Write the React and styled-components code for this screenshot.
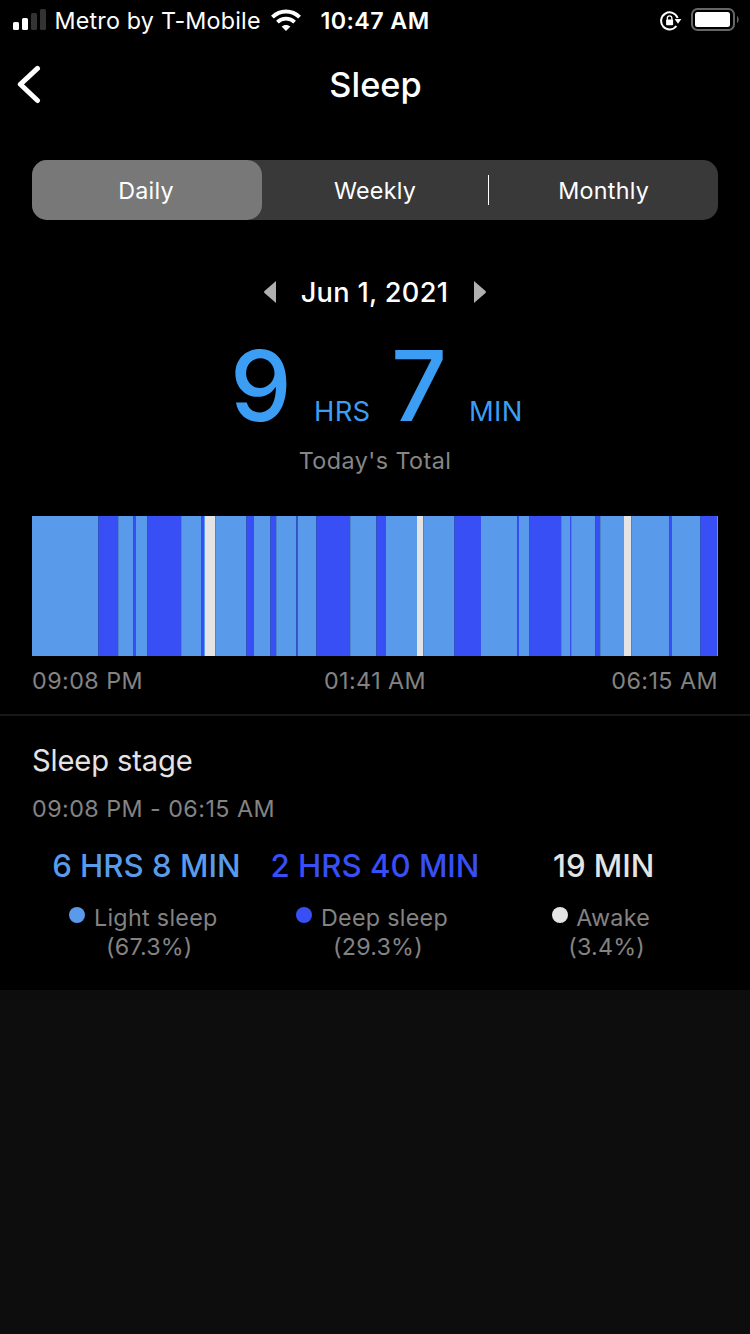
import React from "react";
import styled, { createGlobalStyle } from "styled-components";

const GlobalStyle = createGlobalStyle`
  * { box-sizing: border-box; }
  html, body { margin: 0; padding: 0; background: #0d0d0d; }
`;

const LIGHT = "#599bea";
const DEEP = "#384ff5";
const AWAKE = "#e4e4e4";

const Screen = styled.div`
  width: 750px;
  height: 1334px;
  background: #0d0d0d;
  color: #fff;
  font-family: Inter, "Liberation Sans", sans-serif;
  white-space: nowrap;
  overflow: hidden;
`;

const Content = styled.div`
  height: 990px;
  background: #000;
`;

const StatusBar = styled.header`
  display: flex;
  align-items: center;
  height: 40px;
  padding: 1px 11px 0 13px;
`;

const Signal = styled.div`
  display: flex;
  align-items: flex-end;
  gap: 3px;
  width: 41.5px;
  height: 21px;
  margin-top: -3px;
`;

const SignalBar = styled.span`
  width: 6px;
  height: ${(p) => p.$h}px;
  border-radius: 1.5px;
  background: ${(p) => (p.$on ? "#fff" : "#333")};
`;

const Carrier = styled.span`
  width: 216px;
  font-size: 23.3px;
  letter-spacing: 0.2px;
`;

const Clock = styled.span`
  margin-left: 20px;
  flex: 1;
  font-size: 23.3px;
  font-weight: 600;
  letter-spacing: 0.4px;
`;

const NavBar = styled.div`
  display: grid;
  grid-template-columns: 100px 1fr 100px;
  align-items: center;
  height: 89px;
`;

const BackButton = styled.button`
  display: flex;
  padding: 0 0 0 16px;
  border: 0;
  background: none;
`;

const Title = styled.h1`
  margin: 0;
  padding-left: 1px;
  text-align: center;
  font-size: 34.3px;
  font-weight: 500;
  line-height: 89px;
`;

const Tabs = styled.div`
  display: grid;
  grid-template-columns: repeat(3, 1fr);
  height: 60px;
  margin: 31px 32px 0;
  border-radius: 15px;
  background: #393939;
`;

const Tab = styled.button`
  display: flex;
  align-items: center;
  justify-content: center;
  position: relative;
  padding: 1px ${(p) => (p.$active ? 2 : 0)}px 0 0;
  margin-right: ${(p) => (p.$active ? "-1.4px" : "0")};
  border: 0;
  border-radius: 15px;
  background: ${(p) => (p.$active ? "#787878" : "none")};
  color: #fff;
  font: 400 23.3px Inter, sans-serif;
  letter-spacing: 0.25px;

  &::after {
    content: "";
    display: ${(p) => (p.$divided ? "block" : "none")};
    position: absolute;
    right: 0;
    top: 15px;
    width: 1px;
    height: 30px;
    background: #fff;
  }
`;

const DateRow = styled.div`
  display: flex;
  align-items: center;
  justify-content: center;
  height: 40px;
  margin: 52px 1px 0 0;
`;

const DateLabel = styled.span`
  width: 196px;
  text-align: center;
  font-size: 27.2px;
  font-weight: 500;
  letter-spacing: 0.3px;
`;

const Total = styled.div`
  display: flex;
  align-items: baseline;
  height: 118px;
  margin-top: 15px;
  padding-left: 230px;
  color: #3b9df3;
  line-height: 118px;
`;

const BigNumber = styled.span`
  width: ${(p) => p.$w}px;
  font-size: 98px;
  font-weight: 450;
`;

const Unit = styled.span`
  width: ${(p) => p.$w}px;
  font-size: 27.4px;
  letter-spacing: 0.3px;
`;

const Caption = styled.div`
  height: 30px;
  margin-top: 1px;
  text-align: center;
  color: #868686;
  font-size: 23.3px;
  line-height: 30px;
  letter-spacing: 0.45px;
`;

const Timeline = styled.div`
  display: flex;
  height: 140px;
  margin: 40px 32px 0;
`;

const Segment = styled.div`
  width: ${(p) => p.$w}px;
  border-style: solid;
  border-color: ${(p) => (p.$kind === "deep" ? "#3153c4" : "#4a86c9")};
  border-width: 0 0 0 ${(p) => (p.$seam ? 1 : 0)}px;
  background: ${(p) => ({ light: LIGHT, deep: DEEP, awake: AWAKE })[p.$kind]};
`;

const TimeAxis = styled.div`
  display: grid;
  grid-template-columns: repeat(3, 1fr);
  height: 58px;
  padding: 0 32px;
  color: #838383;
  font-size: 23.3px;
  line-height: 50px;
  letter-spacing: 0.45px;
  text-align: center;

  & > :first-child { text-align: left; }
  & > :last-child { text-align: right; }
`;

const StageSection = styled.section`
  border-top: 2px solid #171717;
  padding-top: 25px;
`;

const StageTitle = styled.h2`
  height: 40px;
  margin: 0 0 0 32px;
  color: #e4e4e4;
  font-size: 29.2px;
  font-weight: 400;
  line-height: 40px;
  letter-spacing: -0.15px;
`;

const StageRange = styled.div`
  height: 30px;
  margin: 13px 0 0 32px;
  color: #838383;
  font-size: 23.3px;
  line-height: 30px;
  letter-spacing: 0.45px;
`;

const StageGrid = styled.div`
  display: grid;
  grid-template-columns: repeat(3, 1fr);
  margin: 22px 32px 0;
`;

const Stage = styled.div`
  display: flex;
  flex-direction: column;
  align-items: center;
`;

const StageValue = styled.div`
  color: ${(p) => p.$color};
  font-size: 31.2px;
  font-weight: 500;
  line-height: 40px;
`;

const StageLabel = styled.div`
  display: flex;
  gap: 8.5px;
  margin: 17px 5.5px 0 0;
  color: #838383;
  font-size: 23.3px;
  line-height: 29px;
  letter-spacing: 0.3px;
`;

const Dot = styled.span`
  width: 16px;
  height: 16px;
  margin-top: 4px;
  border-radius: 50%;
  background: ${(p) => p.$color};
`;

const Percent = styled.div`
  padding-left: 6px;
  color: #838383;
  font-size: 23.3px;
  line-height: 29px;
  letter-spacing: 0.2px;
`;

// kind, width in pixels, seam drawn on the left edge
const SEGMENTS = [
  ["light", 66, 0], ["deep", 20, 1], ["light", 15, 1], ["deep", 3, 1],
  ["light", 11, 0], ["deep", 34, 1], ["light", 20, 1], ["deep", 3, 1],
  ["light", 1, 0], ["awake", 10, 0], ["light", 31, 1], ["deep", 8, 1],
  ["light", 16, 0], ["deep", 6, 1], ["light", 20, 1], ["deep", 2, 1],
  ["light", 18, 0], ["deep", 34, 1], ["light", 26, 1], ["deep", 10, 1],
  ["light", 31, 0], ["awake", 6, 0], ["light", 31, 1], ["deep", 27, 1],
  ["light", 36, 0], ["deep", 2, 1], ["light", 10, 0], ["deep", 32, 1],
  ["light", 9, 1], ["deep", 1, 0], ["light", 24, 1], ["deep", 5, 1],
  ["light", 24, 1], ["awake", 7, 0], ["light", 38, 1], ["deep", 3, 1],
  ["light", 28, 0], ["deep", 17, 1], ["light", 1, 0],
];

const STAGES = [
  { value: "6 HRS 8 MIN", name: "Light sleep", percent: "(67.3%)", color: LIGHT },
  { value: "2 HRS 40 MIN", name: "Deep sleep", percent: "(29.3%)", color: DEEP },
  { value: "19 MIN", name: "Awake", percent: "(3.4%)", color: AWAKE },
];

const WifiIcon = () => (
  <svg width="30" height="23" viewBox="0 0 30 23" fill="none" stroke="#fff">
    <path d="M1.4 8.2 C9 0.6 21 0.6 28.6 8.2" strokeWidth="4" />
    <path d="M6.4 13.1 C11.2 8.4 18.8 8.4 23.6 13.1" strokeWidth="3.8" />
    <path d="M15 22 L10.6 17.6 C13 15.3 17 15.3 19.4 17.6 Z" fill="#fff" stroke="none" />
  </svg>
);

const RotationLockIcon = () => (
  <svg width="22" height="22" viewBox="0 -2 22 22" fill="none">
    <path d="M16.4 15 A8.5 8.5 0 1 1 17.6 7" stroke="#fff" strokeWidth="2" />
    <path d="M14.6 8 H21.4 L18 12.8 Z" fill="#fff" />
    <path d="M7.3 9 V7.4 A2.3 2.5 0 0 1 11.9 7.4 V9" stroke="#fff" strokeWidth="1.3" />
    <rect x="6.1" y="8.6" width="7" height="5.6" rx="0.8" fill="#fff" />
  </svg>
);

const BatteryIcon = () => (
  <svg width="48" height="23" viewBox="0 0 48 23" fill="none">
    <rect x="1" y="1" width="42" height="21" rx="5.5" stroke="#666" strokeWidth="2" />
    <rect x="4" y="4" width="35" height="15" rx="2.5" fill="#fff" />
    <path d="M46 8 C48.2 9 48.2 14 46 15 Z" fill="#666" />
  </svg>
);

const StatusIcons = styled.div`
  display: flex;
  align-items: center;
  gap: 9px;
  margin-top: -2px;
`;

export default function App() {
  return (
    <Screen>
      <GlobalStyle />
      <Content>
        <StatusBar>
          <Signal>
            <SignalBar $h={8} $on />
            <SignalBar $h={12} $on />
            <SignalBar $h={17} />
            <SignalBar $h={21} />
          </Signal>
          <Carrier>Metro by T-Mobile</Carrier>
          <WifiIcon />
          <Clock>10:47 AM</Clock>
          <StatusIcons>
            <RotationLockIcon />
            <BatteryIcon />
          </StatusIcons>
        </StatusBar>
        <NavBar>
          <BackButton aria-label="Back">
            <svg width="26" height="40" viewBox="0 0 26 40" fill="none">
              <path d="M21.5 3.4 L4.3 19.3 L21.5 35.5" stroke="#fff" strokeWidth="5" strokeLinecap="round" strokeLinejoin="round" />
            </svg>
          </BackButton>
          <Title>Sleep</Title>
        </NavBar>
        <Tabs>
          <Tab $active>Daily</Tab>
          <Tab $divided>Weekly</Tab>
          <Tab>Monthly</Tab>
        </Tabs>
        <DateRow>
          <svg width="13" height="22" viewBox="0 0 13 22">
            <path d="M12 0 V22 L0.5 12 Q-0.3 11 0.5 10 Z" fill="#b0b0b0" />
          </svg>
          <DateLabel>Jun 1, 2021</DateLabel>
          <svg width="13" height="22" viewBox="0 0 13 22">
            <path d="M1 0 V22 L12.5 12 Q13.3 11 12.5 10 Z" fill="#b0b0b0" />
          </svg>
        </DateRow>
        <Total>
          <BigNumber $w={84}>9</BigNumber>
          <Unit $w={77}>HRS</Unit>
          <BigNumber $w={78}>7</BigNumber>
          <Unit $w={60}>MIN</Unit>
        </Total>
        <Caption>Today's Total</Caption>
        <Timeline>
          {SEGMENTS.map(([kind, width, seam], i) => (
            <Segment key={i} $kind={kind} $w={width} $seam={seam} />
          ))}
        </Timeline>
        <TimeAxis>
          <span>09:08 PM</span>
          <span>01:41 AM</span>
          <span>06:15 AM</span>
        </TimeAxis>
        <StageSection>
          <StageTitle>Sleep stage</StageTitle>
          <StageRange>09:08 PM - 06:15 AM</StageRange>
          <StageGrid>
            {STAGES.map((s) => (
              <Stage key={s.name}>
                <StageValue $color={s.color}>{s.value}</StageValue>
                <StageLabel>
                  <Dot $color={s.color} />
                  {s.name}
                </StageLabel>
                <Percent>{s.percent}</Percent>
              </Stage>
            ))}
          </StageGrid>
        </StageSection>
      </Content>
    </Screen>
  );
}
